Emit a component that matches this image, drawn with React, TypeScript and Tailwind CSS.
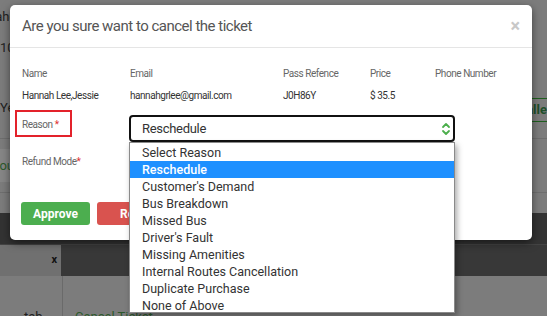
import React from 'react';

const REASONS = [
  'Select Reason',
  'Reschedule',
  "Customer's Demand",
  'Bus Breakdown',
  'Missed Bus',
  "Driver's Fault",
  'Missing Amenities',
  'Internal Routes Cancellation',
  'Duplicate Purchase',
  'None of Above',
];

const FONT = { fontFamily: 'Roboto, "Liberation Sans", sans-serif' };

/* ── Page behind the dimmed overlay ───────────────────────────────────────── */
function BackgroundPage() {
  return (
    <div className="flex flex-col w-full h-full bg-[#7c7c7c] text-[#1f1f1f] [&>*]:shrink-0">
      <div className="h-[40px] pt-[9px] text-[13px] leading-[16px] ml-[-12px]">nahg</div>
      <div className="h-[60px] text-[13px] leading-[16px]">10</div>
      <div className="h-[39px] flex items-start border-b border-[#6e6e6e]">
        <span className="text-[13px] leading-[16px] w-[524px]">Ye</span>
        <span className="mt-[-2px] h-[24px] border-y border-[#1f5f1f] text-[#1e4f2a] text-[13px] font-bold leading-[22px] whitespace-nowrap">
          Calle
        </span>
      </div>
      <div className="h-[54px] flex items-center border-b border-[#6e6e6e]">
        <div className="h-[33px] w-[40px] bg-[#868686] text-[#2c5a2c] text-[13px] leading-[33px] pl-[1px]">
          <span className="ml-[-9px]">You</span>
        </div>
      </div>
      <div className="h-[20px]" />
      <div className="h-[32px] bg-[#333333] border-b border-[#444]" />
      <div className="h-[31px] flex bg-[#383838]">
        <div className="w-[61px] bg-[#707070] flex items-center justify-end pr-[4px] text-[11px] font-bold text-[#111]">
          x
        </div>
      </div>
      <div className="h-[60px] flex">
        <div className="w-[63px] border-r border-[#6a6a6a] pl-[24px] pt-[33px] text-[13px] text-[#1f1f1f] leading-[16px]">
          tab
        </div>
        <div className="pl-[12px] pt-[33px] text-[13px] text-[#2c5a2c] leading-[16px] whitespace-nowrap">Cancel Ticket</div>
      </div>
    </div>
  );
}

function Chevrons() {
  return (
    <svg width="10" height="14" viewBox="0 0 10 14" fill="none" stroke="#4cae4c" strokeWidth="1.8" strokeLinecap="round" strokeLinejoin="round">
      <path d="M2 5 L5 2 L8 5" />
      <path d="M2 9 L5 12 L8 9" />
    </svg>
  );
}

export default function App() {
  return (
    <div className="relative w-[547px] h-[316px] overflow-hidden" style={FONT}>
      <BackgroundPage />

      {/* Modal */}
      <div className="absolute left-[10px] top-[5px] w-[522px] h-[235px] bg-white rounded-[5px] shadow-[0_3px_9px_rgba(0,0,0,0.5)] flex flex-col">
        <div className="h-[43px] flex items-center justify-between border-b border-[#e5e5e5] pl-[12px] pr-[12px]">
          <h4 className="text-[15px] tracking-[-0.5px] text-[#555] pt-[1px]">Are you sure want to cancel the ticket</h4>
          <span className="text-[18px] font-bold text-[#c8c8c8] leading-none">×</span>
        </div>

        <div className="pl-[12px] pt-[20px] text-[10px] leading-[12px] tracking-[-0.45px]">
          <div className="grid grid-cols-[108px_153px_87px_65px_1fr] text-[#666]">
            <span>Name</span>
            <span>Email</span>
            <span>Pass Refence</span>
            <span>Price</span>
            <span>Phone Number</span>
          </div>
          <div className="grid grid-cols-[108px_153px_87px_65px_1fr] text-[#333] mt-[10px]">
            <span>Hannah Lee,Jessie</span>
            <span>hannahgrlee@gmail.com</span>
            <span>J0H86Y</span>
            <span>$ 35.5</span>
            <span />
          </div>

          <div className="flex items-start mt-[6px]">
            <div className="ml-[-7px] mt-[2px] w-[57px] h-[27px] border-2 border-[#e3222b] pl-[5px] pt-[7px] text-[#666]">
              Reason <span className="text-[#e03030]">*</span>
            </div>
            <div className="ml-[57px] mt-[7px] w-[326px] h-[27px] border-2 border-[#111] rounded-[4px] flex items-center justify-between pl-[11px] pr-[2px] text-[13px] tracking-[-0.3px] text-[#333]">
              <span>Reschedule</span>
              <Chevrons />
            </div>
          </div>

          <div className="mt-[14px] text-[#666]">
            Refund Mode<span className="text-[#e03030]">*</span>
          </div>

          <div className="flex gap-[7px] mt-[34px] ml-[-1px] tracking-normal">
            <button className="w-[69px] h-[23px] rounded-[3px] bg-[#4cae4f] text-white text-[12px] font-bold">Approve</button>
            <button className="w-[80px] h-[23px] rounded-[3px] bg-[#d9534f] text-white text-[12px] font-bold">Reject</button>
          </div>
        </div>
      </div>

      {/* Open native-style dropdown list */}
      <ul className="absolute left-[129px] top-[142px] w-[326px] h-[171px] bg-white border border-[#8a8a8a] shadow-[2px_3px_6px_rgba(0,0,0,0.35)] py-px">
        {REASONS.map((r) => (
          <li
            key={r}
            className={`h-[17px] pl-[12px] text-[12.5px] leading-[17px] ${
              r === 'Reschedule' ? 'bg-[#1e90ff] text-white font-medium' : 'text-[#333]'
            }`}
          >
            {r}
          </li>
        ))}
      </ul>
    </div>
  );
}
